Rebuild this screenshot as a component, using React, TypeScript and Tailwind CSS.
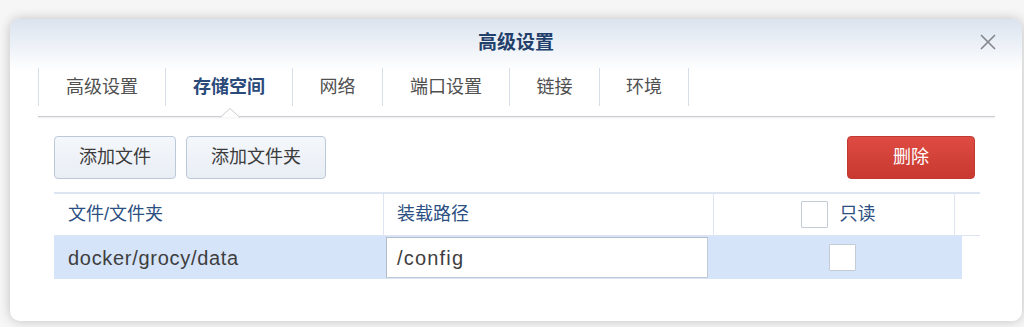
import { X } from "lucide-react"

const tabs = [
  { label: "高级设置", w: "w-[128px]" },
  { label: "存储空间", w: "w-[127px]", active: true },
  { label: "网络", w: "w-[90px]" },
  { label: "端口设置", w: "w-[127px]" },
  { label: "链接", w: "w-[90px]" },
  { label: "环境", w: "w-[89px]" },
]

function Checkbox() {
  return <span className="block h-[27px] w-[27px] border border-[#c3cbd6] bg-white rounded-[1px]" />
}

export default function App() {
  return (
    <div
      className="h-[327px] w-[1024px] overflow-hidden bg-[#f6f6f6] pt-[19px] pl-[10px]"
      style={{ fontFamily: '"Liberation Sans", "Noto Sans CJK SC", sans-serif' }}
    >
      <div className="relative h-[302px] w-[1012px] rounded-[10px] bg-[linear-gradient(to_bottom,#dae3ef_0px,#ffffff_52px)] shadow-[0_0_12px_rgba(0,0,0,0.22)]">
        {/* title bar */}
        <div className="relative flex h-[48px] items-center justify-center">
          <span className="text-[19px] font-bold text-[#233f6b]">高级设置</span>
          <button className="absolute right-[21px] top-[10px] text-[#85898f]">
            <X className="h-[26px] w-[26px]" strokeWidth={1.6} />
          </button>
        </div>

        {/* tabs */}
        <div className="mx-[28px] relative">
          <div className="flex h-[38px] mt-[1px]">
            {tabs.map((t, i) => (
              <div
                key={t.label}
                className={`${t.w} flex items-center justify-center border-r border-[#d6dee9] ${i === 0 ? "border-l" : ""} text-[18px] ${
                  t.active ? "font-bold text-[#2a4a7a]" : "text-[#505050]"
                }`}
              >
                {t.label}
              </div>
            ))}
          </div>
          <div className="mt-[10px] h-[1px] w-[957px] bg-[#c9cdd2] shadow-[0_1px_2px_rgba(0,0,0,0.12)]" />
          <svg className="absolute left-[182px] top-[40px]" width="20" height="10" viewBox="0 0 20 10">
            <path d="M0 9.5 L10 0.5 L20 9.5" fill="#ffffff" stroke="#c9cdd2" strokeWidth="1" />
          </svg>
        </div>

        {/* toolbar */}
        <div className="mt-[19px] flex items-center justify-between pl-[44px] pr-[47px]">
          <div className="flex gap-[10px]">
            <button className="h-[43px] w-[122px] rounded-[4px] border border-[#bcc8d8] bg-[linear-gradient(to_bottom,#f4f7fb,#e9eef5)] text-[18px] text-[#3b3b3b]">
              添加文件
            </button>
            <button className="h-[43px] w-[140px] rounded-[4px] border border-[#bcc8d8] bg-[linear-gradient(to_bottom,#f4f7fb,#e9eef5)] text-[18px] text-[#3b3b3b]">
              添加文件夹
            </button>
          </div>
          <button className="h-[43px] w-[128px] rounded-[4px] border border-[#bf3a33] bg-[linear-gradient(to_bottom,#dd4b42,#c9392f)] text-[18px] text-white">
            删除
          </button>
        </div>

        {/* table */}
        <div className="ml-[44px] mt-[13px] w-[926px] border-t-2 border-[#dce5f1]">
          <div className="flex h-[42px] border-b border-[#dce5f1] text-[18px] text-[#2b4f82]">
            <div className="flex w-[330px] items-center border-r border-[#dce5f1] pl-[14px]">文件/文件夹</div>
            <div className="flex w-[330px] items-center border-r border-[#dce5f1] pl-[13px]">装载路径</div>
            <div className="flex w-[241px] items-center justify-center gap-[12px] border-r border-[#dce5f1] pl-[8px]">
              <Checkbox />
              <span>只读</span>
            </div>
            <div className="w-[25px]" />
          </div>
          <div className="flex h-[43px] w-[908px] bg-[#d5e4f8] text-[20px] tracking-[0.7px] text-[#3e3e3e]">
            <div className="flex w-[332px] items-center pl-[14px]">docker/grocy/data</div>
            <div className="flex w-[322px] items-center py-[1px]">
              <div className="flex h-[41px] w-full items-center border border-[#c2cad6] border-t-[#b3bcc9] border-l-[#b3bcc9] bg-white pl-[10px] tracking-[1.2px]">
                /config
              </div>
            </div>
            <div className="flex flex-1 items-center justify-center pl-[14px]">
              <Checkbox />
            </div>
          </div>
        </div>
      </div>
    </div>
  )
}
